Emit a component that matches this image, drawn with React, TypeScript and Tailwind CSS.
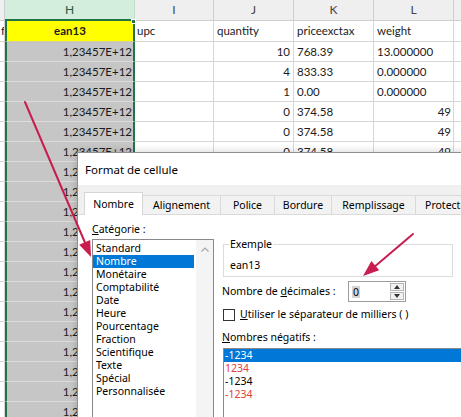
import React from 'react';

type Row = { j: string; k: string; l: string; lRight?: boolean };

const rows: Row[] = [
  { j: '10', k: '768.39', l: '13.000000' },
  { j: '4', k: '833.33', l: '0.000000' },
  { j: '1', k: '0.00', l: '0.000000' },
  { j: '0', k: '374.58', l: '49', lRight: true },
  { j: '0', k: '374.58', l: '49', lRight: true },
  { j: '0', k: '374.58', l: '49', lRight: true },
];

const BODY_ROWS = 19;

function Sheet() {
  const body = Array.from({ length: BODY_ROWS }, (_, i) => rows[i] ?? { j: '0', k: '374.58', l: '49', lRight: true });
  return (
    <div className="grid grid-cols-[5px_130px_79px_80px_80px_80px_7px] font-['Lato',sans-serif] text-[11.5px] text-[#1b1b1b]">
      {/* column headers */}
      <div className="h-[21px] bg-[#efefef] border-r border-b border-[#cfcfcf]" />
      <div className="h-[21px] bg-[#d3eedd] border-b-2 border-b-[#217346] border-r border-r-[#c6d9cc] flex items-center justify-center text-[12px] text-[#2c5a3f]">H</div>
      {['I', 'J', 'K', 'L'].map((c) => (
        <div key={c} className="h-[21px] bg-[#efefef] border-r border-b border-[#cfcfcf] flex items-center justify-center text-[12px] text-[#444]">{c}</div>
      ))}
      <div className="h-[21px] bg-[#efefef] border-b border-[#cfcfcf]" />

      {/* field names */}
      <div className="h-[21px] border-r border-b border-[#d6d6d6] overflow-hidden flex items-center justify-end">
        <span className="leading-none -mr-px">f</span>
      </div>
      <div className="relative h-[21px] bg-[#ffff00] border-x-2 border-[#217346] border-b border-b-[#d0d0a0] flex items-center justify-center font-bold">
        ean13
        <span className="absolute -right-[3px] -top-[2px] w-[5px] h-[5px] bg-[#217346] border border-white" />
      </div>
      <div className="h-[21px] border-r border-b border-[#d6d6d6] flex items-center pl-[2px]">upc</div>
      <div className="h-[21px] border-r border-b border-[#d6d6d6] flex items-center pl-[3px]">quantity</div>
      <div className="h-[21px] border-r border-b border-[#d6d6d6] flex items-center pl-[3px]">priceexctax</div>
      <div className="h-[21px] border-r border-b border-[#d6d6d6] flex items-center pl-[3px]">weight</div>
      <div className="h-[21px] border-b border-[#d6d6d6]" />

      {body.map((r, i) => (
        <React.Fragment key={i}>
          <div className="h-[20px] border-r border-b border-[#d6d6d6]" />
          <div className="h-[20px] bg-[#c6c6c6] border-x-2 border-[#217346] border-b border-b-[#dcdcdc] flex items-center justify-end pr-[1px]">1,23457E+12</div>
          <div className="h-[20px] border-r border-b border-[#d6d6d6]" />
          <div className="h-[20px] border-r border-b border-[#d6d6d6] flex items-center justify-end pr-[3px]">{r.j}</div>
          <div className="h-[20px] border-r border-b border-[#d6d6d6] flex items-center pl-[3px]">{r.k}</div>
          <div className={`h-[20px] border-r border-b border-[#d6d6d6] flex items-center ${r.lRight ? 'justify-end pr-[2px]' : 'pl-[3px]'}`}>{r.l}</div>
          <div className="h-[20px] border-b border-[#d6d6d6]" />
        </React.Fragment>
      ))}
    </div>
  );
}

const categories = [
  'Standard',
  'Nombre',
  'Monétaire',
  'Comptabilité',
  'Date',
  'Heure',
  'Pourcentage',
  'Fraction',
  'Scientifique',
  'Texte',
  'Spécial',
  'Personnalisée',
];

const tabs = [
  { label: 'Nombre', w: 'w-[59px]' },
  { label: 'Alignement', w: 'w-[78px]' },
  { label: 'Police', w: 'w-[54px]' },
  { label: 'Bordure', w: 'w-[57px]' },
  { label: 'Remplissage', w: 'w-[84px]' },
  { label: 'Protection', w: 'w-[70px]' },
];

const negatives = [
  { text: '-1234', cls: 'bg-[#0078d7] text-white' },
  { text: '1234', cls: 'text-[#e0403a]' },
  { text: '-1234', cls: 'text-black' },
  { text: '-1234', cls: 'text-[#e0403a]' },
];

function FormatDialog() {
  return (
    <div className="absolute left-[77px] top-[152px] w-[400px] h-[280px] bg-white border-l border-t border-[#8e8e8e] shadow-[-2px_-2px_6px_rgba(0,0,0,0.12)] font-['Noto_Sans',sans-serif] text-[10.5px] leading-[13px] text-black">
      <div className="h-[32px] flex items-center pl-[7px] text-[11.5px]">Format de cellule</div>

      <div className="h-[30px] bg-[#f0f0f0] flex items-end pl-[6px] border-b border-[#dadada]">
        {tabs.map((t, i) =>
          i === 0 ? (
            <div key={t.label} className={`${t.w} h-[23px] -mb-px bg-white border-x border-t border-[#d6d6d6] flex items-center justify-center shrink-0`}>
              {t.label}
            </div>
          ) : (
            <div key={t.label} className={`${t.w} h-[19px] bg-[#f2f2f2] border-r border-t border-[#dadada] flex items-center justify-center shrink-0 whitespace-nowrap overflow-hidden`}>
              {t.label}
            </div>
          ),
        )}
      </div>

      <div className="flex pl-[14px]">
        {/* category list */}
        <div className="w-[122px] flex flex-col shrink-0">
          <div className="mt-[8px] h-[13px]">
            <span className="underline underline-offset-[1px]">C</span>atégorie :
          </div>
          <div className="mt-[3px] h-[200px] border border-[#8a8a8a] flex">
            <div className="w-[101px] pt-[2px] flex flex-col">
              {categories.map((c) => (
                <div key={c} className={`h-[13px] pl-[3px] whitespace-nowrap ${c === 'Nombre' ? 'bg-[#0078d7] text-white' : ''}`}>
                  {c}
                </div>
              ))}
            </div>
            <div className="ml-[2px] w-[17px] bg-[#f4f4f4] flex flex-col items-center pt-[7px]">
              <svg width="8" height="5" viewBox="0 0 8 5">
                <path d="M0.5 4.5 L4 1 L7.5 4.5" fill="none" stroke="#a6a6a6" strokeWidth="1.2" />
              </svg>
            </div>
          </div>
        </div>

        {/* options */}
        <div className="ml-[8px] flex-1 flex flex-col">
          <fieldset className="mt-[23px] ml-px w-[230px] h-[39px] border border-[#dcdcdc] px-[5px]">
            <legend className="px-px">Exemple</legend>
            <div className="mt-[8px] pl-px">ean13</div>
          </fieldset>

          <div className="mt-[4px] h-[21px] flex items-center">
            <div className="w-[126px] shrink-0">
              Nombre de <span className="underline underline-offset-[1px]">d</span>écimales :
            </div>
            <div className="w-[58px] h-[21px] border border-[#9c9c9c] flex items-center">
              <span className="ml-[3px] px-[1px] bg-[#d4d4d4] leading-[12px]">0</span>
              <div className="ml-auto mr-px w-[14px] h-[17px] flex flex-col gap-px">
                <div className="flex-1 border border-[#b5b5b5] bg-[#f2f2f2] flex items-center justify-center">
                  <svg width="6" height="4" viewBox="0 0 6 4"><path d="M0 4 L3 0 L6 4 Z" fill="#333" /></svg>
                </div>
                <div className="flex-1 border border-[#b5b5b5] bg-[#f2f2f2] flex items-center justify-center">
                  <svg width="6" height="4" viewBox="0 0 6 4"><path d="M0 0 L6 0 L3 4 Z" fill="#333" /></svg>
                </div>
              </div>
            </div>
          </div>

          <div className="mt-[6px] h-[13px] flex items-center">
            <div className="ml-px w-[12px] h-[12px] border border-[#333] bg-white shrink-0" />
            <div className="ml-[5px] whitespace-nowrap">
              <span className="underline underline-offset-[1px]">U</span>tiliser le séparateur de milliers ( )
            </div>
          </div>

          <div className="mt-[10px] h-[13px]">
            <span className="underline underline-offset-[1px]">N</span>ombres négatifs :
          </div>

          <div className="mt-[4px] ml-px h-[90px] border border-[#8a8a8a] flex flex-col">
            {negatives.map((n, i) => (
              <div key={i} className={`h-[13px] pl-px ${n.cls}`}>{n.text}</div>
            ))}
          </div>
        </div>
      </div>
    </div>
  );
}

function Arrows() {
  return (
    <svg className="absolute inset-0 pointer-events-none" width="461" height="417" viewBox="0 0 461 417">
      <g stroke="#c81d4e" strokeWidth="2" strokeLinecap="round" fill="#c81d4e">
        <line x1="25" y1="102" x2="86" y2="245" />
        <polygon points="91,257 79.2,244.7 90.2,239.9" stroke="none" />
        <line x1="413" y1="234" x2="373" y2="268" />
        <polygon points="363,276 371.4,261.1 379.2,270.3" stroke="none" />
      </g>
    </svg>
  );
}

export default function App() {
  return (
    <div className="relative w-[461px] h-[417px] overflow-hidden bg-white">
      <Sheet />
      <FormatDialog />
      <Arrows />
    </div>
  );
}
